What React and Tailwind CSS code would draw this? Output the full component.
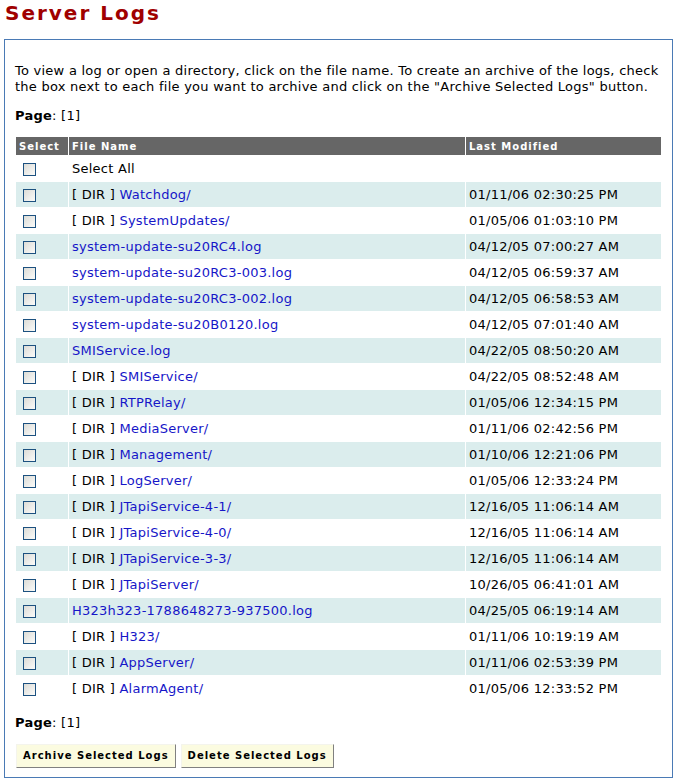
import React from "react";

const rows = [
  { dir: true, name: "Watchdog/", date: "01/11/06 02:30:25 PM" },
  { dir: true, name: "SystemUpdates/", date: "01/05/06 01:03:10 PM" },
  { dir: false, name: "system-update-su20RC4.log", date: "04/12/05 07:00:27 AM" },
  { dir: false, name: "system-update-su20RC3-003.log", date: "04/12/05 06:59:37 AM" },
  { dir: false, name: "system-update-su20RC3-002.log", date: "04/12/05 06:58:53 AM" },
  { dir: false, name: "system-update-su20B0120.log", date: "04/12/05 07:01:40 AM" },
  { dir: false, name: "SMIService.log", date: "04/22/05 08:50:20 AM" },
  { dir: true, name: "SMIService/", date: "04/22/05 08:52:48 AM" },
  { dir: true, name: "RTPRelay/", date: "01/05/06 12:34:15 PM" },
  { dir: true, name: "MediaServer/", date: "01/11/06 02:42:56 PM" },
  { dir: true, name: "Management/", date: "01/10/06 12:21:06 PM" },
  { dir: true, name: "LogServer/", date: "01/05/06 12:33:24 PM" },
  { dir: true, name: "JTapiService-4-1/", date: "12/16/05 11:06:14 AM" },
  { dir: true, name: "JTapiService-4-0/", date: "12/16/05 11:06:14 AM" },
  { dir: true, name: "JTapiService-3-3/", date: "12/16/05 11:06:14 AM" },
  { dir: true, name: "JTapiServer/", date: "10/26/05 06:41:01 AM" },
  { dir: false, name: "H323h323-1788648273-937500.log", date: "04/25/05 06:19:14 AM" },
  { dir: true, name: "H323/", date: "01/11/06 10:19:19 AM" },
  { dir: true, name: "AppServer/", date: "01/11/06 02:53:39 PM" },
  { dir: true, name: "AlarmAgent/", date: "01/05/06 12:33:52 PM" },
];

function Box() {
  return (
    <span className="inline-block w-[13px] h-[13px] border border-[#1c5180] bg-gradient-to-br from-[#dcdcd7] to-[#fbfbf9] align-middle" />
  );
}

function Btn({ children }) {
  return (
    <button className="h-[24px] px-[6px] bg-[#fbfbe0] border border-t-[#f4f4ec] border-l-[#f4f4ec] border-b-[#808080] border-r-[#808080] text-[10px] font-bold tracking-[1px] text-black leading-none">
      {children}
    </button>
  );
}

export default function App() {
  return (
    <div className="bg-white w-[677px] h-[782px] font-['DejaVu_Sans',Verdana,sans-serif] text-black text-[13px] tracking-[0.25px]">
      <h1 className="pl-[5px] pt-[1px] h-[39px] text-[20px] font-bold tracking-[2px] text-[#a00000] leading-[24px]">
        Server Logs
      </h1>
      <div className="ml-[4px] w-[669px] h-[739px] border border-[#4a7ab5] px-[10px] pt-[23px]">
        <p className="leading-[16px]">
          To view a log or open a directory, click on the file name. To create an archive of the logs, check the box next to each file you want to archive and click on the "Archive Selected Logs" button.
        </p>
        <p className="mt-[13px] leading-[16px]">
          <b>Page</b>: [1]
        </p>
        <table className="mt-[12px] border-separate border-spacing-[1px] w-[647px]">
          <thead>
            <tr className="bg-[#666666] text-white text-[10px] font-bold tracking-[1px] text-left">
              <th className="w-[52px] h-[18px] pl-[3px] font-bold">Select</th>
              <th className="w-[396px] pl-[3px] font-bold">File Name</th>
              <th className="pl-[3px] font-bold">Last Modified</th>
            </tr>
          </thead>
          <tbody>
            <tr>
              <td className="h-[25px] pl-[7px]"><Box /></td>
              <td className="pl-[3px]">Select All</td>
              <td></td>
            </tr>
            {rows.map((r, i) => (
              <tr key={i} className={i % 2 === 0 ? "bg-[#dbeded]" : "bg-white"}>
                <td className="h-[25px] pl-[7px]"><Box /></td>
                <td className="pl-[3px]">
                  {r.dir && <span>[ DIR ] </span>}
                  <a className="text-[#1616c8]">{r.name}</a>
                </td>
                <td className="pl-[3px]">{r.date}</td>
              </tr>
            ))}
          </tbody>
        </table>
        <p className="mt-[13px] leading-[16px]">
          <b>Page</b>: [1]
        </p>
        <div className="mt-[13px] flex gap-[5px] pl-[1px]">
          <Btn>Archive Selected Logs</Btn>
          <Btn>Delete Selected Logs</Btn>
        </div>
      </div>
    </div>
  );
}
